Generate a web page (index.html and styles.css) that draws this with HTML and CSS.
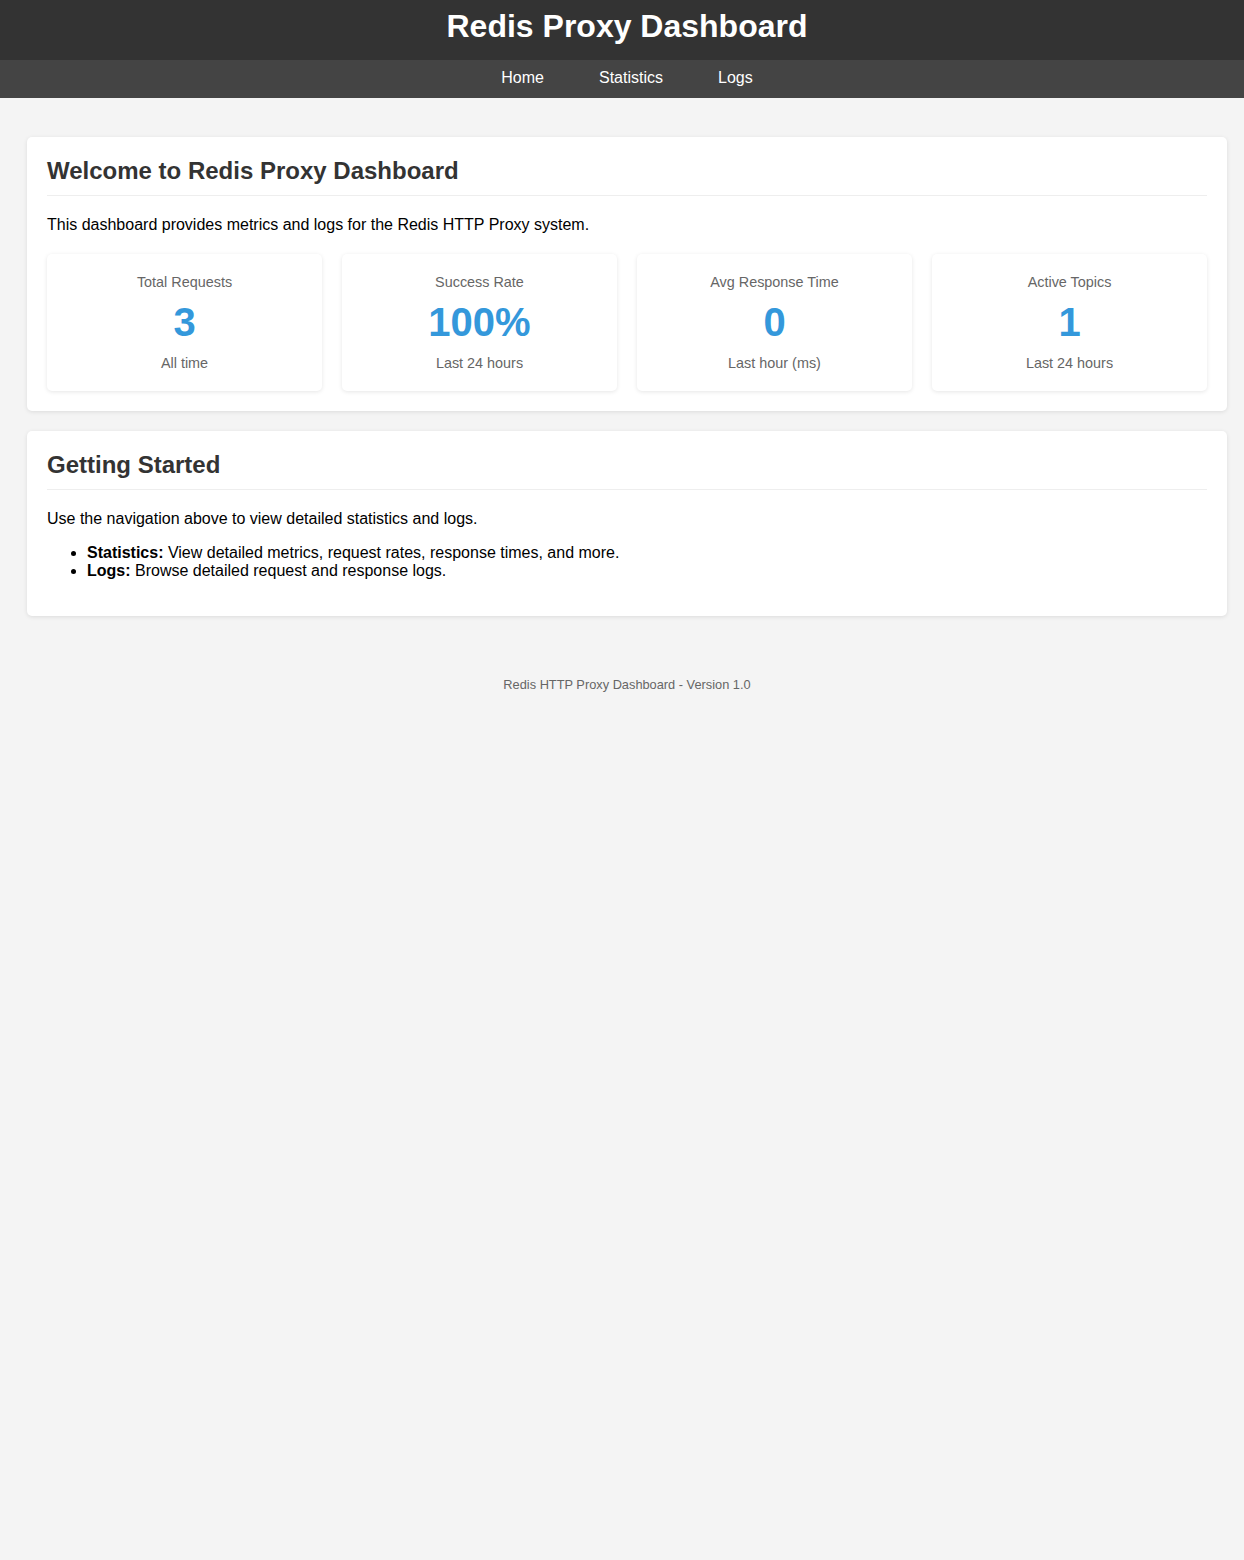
FILE: index.html
```html
<!DOCTYPE html>
<html lang="en">
<head>
<meta charset="utf-8">
<title>Redis Proxy Dashboard</title>
<link rel="stylesheet" href="styles.css">
</head>
<body>
<header class="site-header">
  <h1 class="site-title">Redis Proxy Dashboard</h1>
</header>
<nav class="site-nav">
  <ul class="nav-list">
    <li><a class="nav-link" href="#">Home</a></li>
    <li><a class="nav-link" href="#">Statistics</a></li>
    <li><a class="nav-link" href="#">Logs</a></li>
  </ul>
</nav>
<main class="main">
  <div class="container">
    <section class="card">
      <h2 class="card-title">Welcome to Redis Proxy Dashboard</h2>
      <p class="text">This dashboard provides metrics and logs for the Redis HTTP Proxy system.</p>
      <div class="stats-grid">
        <div class="stat-card">
          <div class="stat-label">Total Requests</div>
          <div class="stat-value">3</div>
          <div class="stat-sub">All time</div>
        </div>
        <div class="stat-card">
          <div class="stat-label">Success Rate</div>
          <div class="stat-value">100%</div>
          <div class="stat-sub">Last 24 hours</div>
        </div>
        <div class="stat-card">
          <div class="stat-label">Avg Response Time</div>
          <div class="stat-value">0</div>
          <div class="stat-sub">Last hour (ms)</div>
        </div>
        <div class="stat-card">
          <div class="stat-label">Active Topics</div>
          <div class="stat-value">1</div>
          <div class="stat-sub">Last 24 hours</div>
        </div>
      </div>
    </section>
    <section class="card">
      <h2 class="card-title">Getting Started</h2>
      <p class="text">Use the navigation above to view detailed statistics and logs.</p>
      <ul class="list">
        <li><strong>Statistics:</strong> View detailed metrics, request rates, response times, and more.</li>
        <li><strong>Logs:</strong> Browse detailed request and response logs.</li>
      </ul>
    </section>
  </div>
</main>
<footer class="site-footer">Redis HTTP Proxy Dashboard - Version 1.0</footer>
</body>
</html>
```

FILE: styles.css
```css
* {
  box-sizing: border-box;
}

html, body {
  margin: 0;
  padding: 0;
}

body {
  font-family: "Liberation Sans", Arial, sans-serif;
  font-size: 16px;
  background: #f4f4f4;
  color: #000;
}

.site-header {
  background: #333;
  color: #fff;
  text-align: center;
  padding: 8px 0 15px 10px;
  height: 60px;
}

.site-title {
  margin: 0;
  font-size: 32px;
  font-weight: bold;
  line-height: 37px;
}

.site-nav {
  background: #444;
  height: 38px;
  padding: 9px 0 0 10px;
}

.nav-list {
  list-style: none;
  margin: 0;
  padding: 0;
  display: flex;
  justify-content: center;
  gap: 25px;
}

.nav-link {
  display: block;
  color: #fff;
  text-decoration: none;
  padding: 0 15px;
  line-height: 18px;
}

.main {
  padding: 39px 0 0 10px;
}

.container {
  max-width: 1200px;
  margin: 0 auto;
}

.card {
  background: #fff;
  border-radius: 5px;
  box-shadow: 0 1px 4px rgba(0, 0, 0, 0.1);
  padding: 20px;
  margin-bottom: 20px;
}

.card-title {
  margin: 0 0 20px;
  padding-bottom: 10px;
  border-bottom: 1px solid #eee;
  font-size: 24px;
  color: #333;
}

.text {
  margin: 16px 0;
}

.stats-grid {
  display: grid;
  grid-template-columns: repeat(4, 1fr);
  gap: 20px;
  margin-top: 20px;
}

.stat-card {
  background: #fff;
  border-radius: 5px;
  box-shadow: 0 1px 4px rgba(0, 0, 0, 0.1);
  padding: 20px;
  text-align: center;
}

.stat-label,
.stat-sub {
  font-size: 14.4px;
  color: #666;
}

.stat-value {
  font-size: 40px;
  font-weight: bold;
  color: #3498db;
  margin: 10px 0;
}

.list {
  margin: 16px 0;
  padding-left: 40px;
}

.site-footer {
  text-align: center;
  font-size: 12.8px;
  color: #666;
  padding: 20px 0 20px 10px;
  margin-top: 41px;
}
```
